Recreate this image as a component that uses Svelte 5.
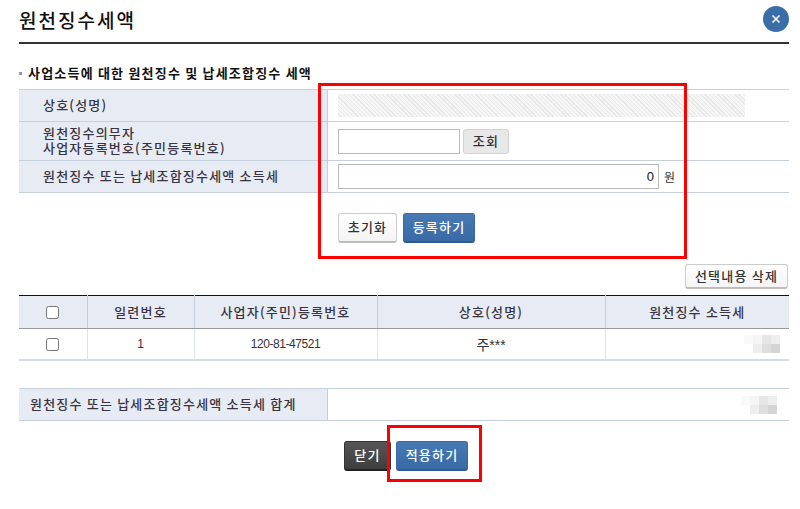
<script>
	const columns = ['일련번호', '사업자(주민)등록번호', '상호(성명)', '원천징수 소득세'];
	const rows = [{ no: '1', bizNo: '120-81-47521', name: '주***' }];
	const blurShades = ['#f9f9f9', '#f5f5f5', '#e6e6e6', '#eeeeee', '#ffffff', '#eeeeee', '#dedede', '#d4d4d4'];
</script>

<div class="popup">
	<header class="popup-head">
		<h1>원천징수세액</h1>
		<button class="close" aria-label="닫기">
			<svg width="10" height="10" viewBox="0 0 10 10">
				<path d="M1.5 1.5l7 7M8.5 1.5l-7 7" stroke="#fff" stroke-width="1.6" fill="none" />
			</svg>
		</button>
	</header>

	<h2 class="section-title">사업소득에 대한 원천징수 및 납세조합징수 세액</h2>

	<div class="form-table">
		<div class="form-row row-name">
			<div class="form-label">상호(성명)</div>
			<div class="form-cell"><div class="hatch"></div></div>
		</div>
		<div class="form-row row-biz">
			<div class="form-label">원천징수의무자<br />사업자등록번호(주민등록번호)</div>
			<div class="form-cell">
				<input class="text-input biz-input" type="text" />
				<button class="btn btn-lookup">조회</button>
			</div>
		</div>
		<div class="form-row row-tax">
			<div class="form-label">원천징수 또는 납세조합징수세액 소득세</div>
			<div class="form-cell">
				<input class="text-input tax-input" type="text" value="0" />
				<span class="unit">원</span>
			</div>
		</div>
	</div>

	<div class="form-actions">
		<button class="btn btn-white">초기화</button>
		<button class="btn btn-blue">등록하기</button>
	</div>

	<div class="list-tools">
		<button class="btn btn-white btn-delete">선택내용 삭제</button>
	</div>

	<table class="list">
		<thead>
			<tr>
				<th class="col-check"><span class="check"></span></th>
				{#each columns as col}
					<th>{col}</th>
				{/each}
			</tr>
		</thead>
		<tbody>
			{#each rows as row}
				<tr>
					<td><span class="check"></span></td>
					<td>{row.no}</td>
					<td class="biz-no">{row.bizNo}</td>
					<td class="name">{row.name}</td>
					<td class="amount">
						<div class="blur">
							{#each blurShades as shade}
								<i style="background: {shade}"></i>
							{/each}
						</div>
					</td>
				</tr>
			{/each}
		</tbody>
	</table>

	<div class="total">
		<div class="total-label">원천징수 또는 납세조합징수세액 소득세 합계</div>
		<div class="total-value">
			<div class="blur">
				{#each blurShades as shade}
					<i style="background: {shade}"></i>
				{/each}
			</div>
		</div>
	</div>

	<div class="page-actions">
		<button class="btn btn-dark">닫기</button>
		<button class="btn btn-blue">적용하기</button>
	</div>

	<!-- annotation boxes drawn over the screen -->
	<div class="mark mark-form"></div>
	<div class="mark mark-apply"></div>
</div>

<style>
	:global(body) {
		margin: 0;
		background: #fff;
	}

	.popup {
		position: relative;
		box-sizing: border-box;
		width: 800px;
		height: 509px;
		padding: 0 11px 0 19px;
		overflow: hidden;
		font-family: 'Noto Sans CJK KR', 'Noto Sans', sans-serif;
		font-size: 13px;
		color: #222;
	}

	.popup-head {
		display: flex;
		align-items: center;
		justify-content: space-between;
		height: 42px;
		border-bottom: 2px solid #333;
	}

	h1 {
		margin: -4px 0 0;
		font-size: 19px;
		font-weight: 500;
		letter-spacing: 2px;
		color: #111;
	}

	.close {
		display: flex;
		align-items: center;
		justify-content: center;
		width: 26px;
		height: 26px;
		margin: -5px 0 0;
		padding: 0;
		border: 0;
		border-radius: 50%;
		background: #3b6ea8;
	}

	.section-title {
		position: relative;
		margin: 20px 0 0;
		padding-left: 9px;
		height: 25px;
		font-size: 13px;
		line-height: 18px;
		font-weight: 700;
		letter-spacing: 1.2px;
		color: #111;
	}

	.section-title::before {
		content: '';
		position: absolute;
		left: 0;
		top: 8px;
		width: 3px;
		height: 3px;
		background: #999;
	}

	.form-table {
		border-top: 1px solid #c6d0dc;
	}

	.form-row {
		display: grid;
		grid-template-columns: 309px 1fr;
		box-sizing: border-box;
		border-bottom: 1px solid #c6d0dc;
	}

	.row-name {
		height: 32px;
	}

	.row-biz {
		height: 39px;
	}

	.row-tax {
		height: 32px;
	}

	.form-label {
		align-content: center;
		padding: 0 0 2px 24px;
		background: #e6ebf4;
		border-right: 1px solid #c6d0dc;
		font-weight: 500;
		line-height: 15px;
		letter-spacing: 1.2px;
		color: #3a3340;
		white-space: nowrap;
	}

	.form-cell {
		display: flex;
		align-items: center;
		padding-left: 10px;
	}

	.hatch {
		width: 407px;
		height: 23px;
		background: repeating-linear-gradient(45deg, #f5f5f5 0 2px, #e9e9e9 2px 3px);
	}

	.text-input {
		box-sizing: border-box;
		height: 25px;
		padding: 0 4px;
		border: 1px solid #b9b9b9;
		background: #fff;
		font-family: 'Liberation Sans', sans-serif;
		font-size: 13px;
		color: #111;
		outline: none;
	}

	.biz-input {
		width: 122px;
	}

	.tax-input {
		width: 321px;
		text-align: right;
	}

	.unit {
		margin-left: 5px;
		font-size: 12px;
		color: #333;
	}

	.btn {
		box-sizing: border-box;
		padding: 0 0 2px;
		border-radius: 3px;
		font-family: inherit;
		font-size: 13px;
		font-weight: 500;
		letter-spacing: 1.2px;
		cursor: pointer;
	}

	.btn-lookup {
		width: 46px;
		height: 25px;
		margin-left: 3px;
		border: 1px solid #d2d2d2;
		background: #e8e8e8;
		color: #333;
	}

	.btn-white {
		border: 1px solid #ccc;
		border-bottom: 2px solid #bcbcbc;
		background: linear-gradient(#fff, #f4f4f4);
		color: #333;
	}

	.btn-blue {
		border: 1px solid #3b6aa3;
		border-bottom: 2px solid #2f5a90;
		background: linear-gradient(#4679b5, #3a6aa6);
		color: #fff;
	}

	.btn-dark {
		border: 1px solid #333;
		border-bottom: 2px solid #222;
		background: linear-gradient(#555, #3e3e3e);
		color: #fff;
	}

	.form-actions {
		display: flex;
		gap: 6px;
		margin: 20px 0 0 319px;
	}

	.form-actions .btn {
		height: 30px;
	}

	.form-actions .btn-white {
		width: 59px;
	}

	.form-actions .btn-blue {
		width: 72px;
	}

	.list-tools {
		display: flex;
		justify-content: flex-end;
		margin: 21px 1px 0 0;
	}

	.btn-delete {
		width: 103px;
		height: 25px;
	}

	.list {
		width: 770px;
		margin-top: 6px;
		border-collapse: collapse;
		table-layout: fixed;
		border-top: 1px solid #111;
	}

	.list th {
		box-sizing: border-box;
		height: 33px;
		padding: 0 0 2px;
		background: #e6ebf4;
		border-right: 1px solid #c6d0dc;
		border-bottom: 1px solid #999;
		font-weight: 500;
		letter-spacing: 1.2px;
		color: #3a3340;
	}

	.list th:nth-child(1) {
		width: 68px;
	}

	.list th:nth-child(2) {
		width: 107px;
	}

	.list th:nth-child(3) {
		width: 183px;
	}

	.list th:nth-child(4) {
		width: 228px;
	}

	.list td {
		height: 30px;
		padding: 0;
		text-align: center;
		border-right: 1px solid #dfe4ea;
		border-bottom: 2px solid #d5dce5;
		font-family: 'Liberation Sans', 'Noto Sans CJK KR', sans-serif;
		font-size: 12px;
		color: #333;
	}

	.list .biz-no {
		letter-spacing: -0.45px;
	}

	.list .name {
		font-size: 14px;
	}

	.list td:last-child,
	.list th:last-child {
		border-right: 0;
	}

	.check {
		display: inline-block;
		box-sizing: border-box;
		width: 13px;
		height: 13px;
		border: 1px solid #767676;
		border-radius: 2.5px;
		background: #fff;
		vertical-align: middle;
	}

	.blur {
		display: grid;
		grid-template-columns: repeat(4, 9px);
		grid-auto-rows: 9px;
		width: 36px;
		margin-left: auto;
	}

	.amount .blur {
		margin-right: 9px;
	}

	.total {
		display: grid;
		grid-template-columns: 309px 1fr;
		height: 33px;
		margin-top: 27px;
		box-sizing: border-box;
		border-top: 1px solid #c6d0dc;
		border-bottom: 1px solid #c6d0dc;
	}

	.total-label {
		padding-left: 11px;
		background: #e6ebf4;
		border-right: 1px solid #c6d0dc;
		font-weight: 500;
		line-height: 29px;
		letter-spacing: 1.2px;
		color: #3a3340;
		white-space: nowrap;
	}

	.total-value {
		display: flex;
		align-items: center;
		padding-right: 12px;
	}

	.page-actions {
		display: flex;
		gap: 5px;
		margin: 20px 0 0 325px;
	}

	.page-actions .btn {
		height: 30px;
	}

	.page-actions .btn-dark {
		width: 47px;
	}

	.page-actions .btn-blue {
		width: 72px;
	}

	.mark {
		position: absolute;
		box-sizing: border-box;
		border: 3px solid #f00;
		pointer-events: none;
	}

	.mark-form {
		left: 318px;
		top: 83px;
		width: 369px;
		height: 176px;
	}

	.mark-apply {
		left: 387px;
		top: 425px;
		width: 95px;
		height: 57px;
	}
</style>
